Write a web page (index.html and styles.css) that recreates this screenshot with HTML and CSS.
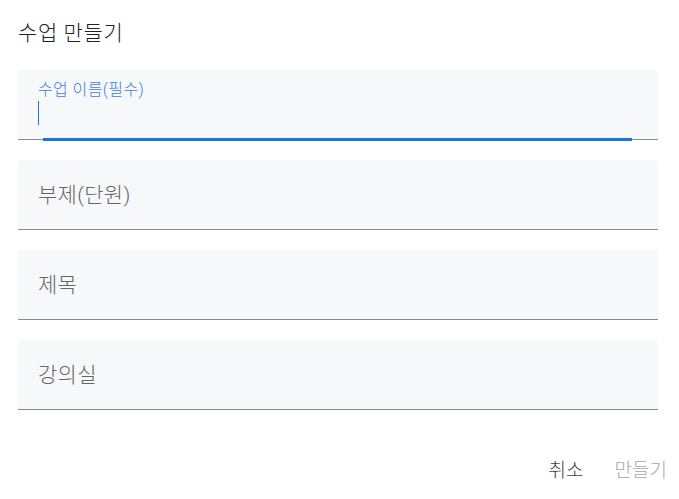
FILE: index.html
```html
<!DOCTYPE html>
<html lang="ko">
<head>
<meta charset="utf-8">
<link rel="stylesheet" href="styles.css">
</head>
<body>
<div class="dialog">
  <h1 class="title">수업 만들기</h1>
  <div class="fields">
    <div class="field focused">
      <span class="label">수업 이름(필수)</span>
      <span class="caret"></span>
      <span class="ripple"></span>
    </div>
    <div class="field"><span class="placeholder">부제(단원)</span></div>
    <div class="field"><span class="placeholder">제목</span></div>
    <div class="field"><span class="placeholder">강의실</span></div>
  </div>
  <div class="actions">
    <span class="btn cancel">취소</span>
    <span class="btn disabled">만들기</span>
  </div>
</div>
</body>
</html>
```
FILE: styles.css
```css
html, body {
  margin: 0;
  padding: 0;
  background: #ffffff;
  font-family: Roboto, "Noto Sans CJK KR", sans-serif;
}
.dialog {
  width: 679px;
  height: 499px;
  padding: 0 0 0 18px;
  box-sizing: border-box;
}
.title {
  margin: 0;
  padding-top: 19px;
  height: 70px;
  box-sizing: border-box;
  font-size: 21px;
  font-weight: 300;
  line-height: 28px;
  letter-spacing: 0.6px;
  color: #202124;
}
.fields {
  width: 640px;
  display: flex;
  flex-direction: column;
  gap: 20px;
}
.field {
  position: relative;
  height: 70px;
  box-sizing: border-box;
  background: #f7f8fa;
  border-radius: 4px 4px 0 0;
  border-bottom: 1px solid #8c8c8c;
  padding-left: 20px;
  display: flex;
  align-items: center;
}
.placeholder {
  font-size: 21px;
  font-weight: 300;
  color: #666666;
  line-height: 26px;
  letter-spacing: 0.3px;
}
.focused {
  display: block;
}
.label {
  position: absolute;
  left: 20px;
  top: 9px;
  font-size: 16px;
  font-weight: 300;
  line-height: 22px;
  letter-spacing: 0.4px;
  color: #3a80e6;
}
.caret {
  position: absolute;
  left: 20px;
  top: 31px;
  width: 1px;
  height: 24px;
  background: #1a73e8;
}
.ripple {
  position: absolute;
  left: 25px;
  right: 26px;
  bottom: -2px;
  height: 3px;
  background: #1a73e8;
}
.actions {
  width: 649px;
  display: flex;
  justify-content: flex-end;
  gap: 31px;
  margin-top: 49px;
}
.btn {
  font-size: 19px;
  font-weight: 300;
  line-height: 24px;
}
.cancel {
  color: #3c4043;
}
.disabled {
  color: #a8a8a8;
}
```
